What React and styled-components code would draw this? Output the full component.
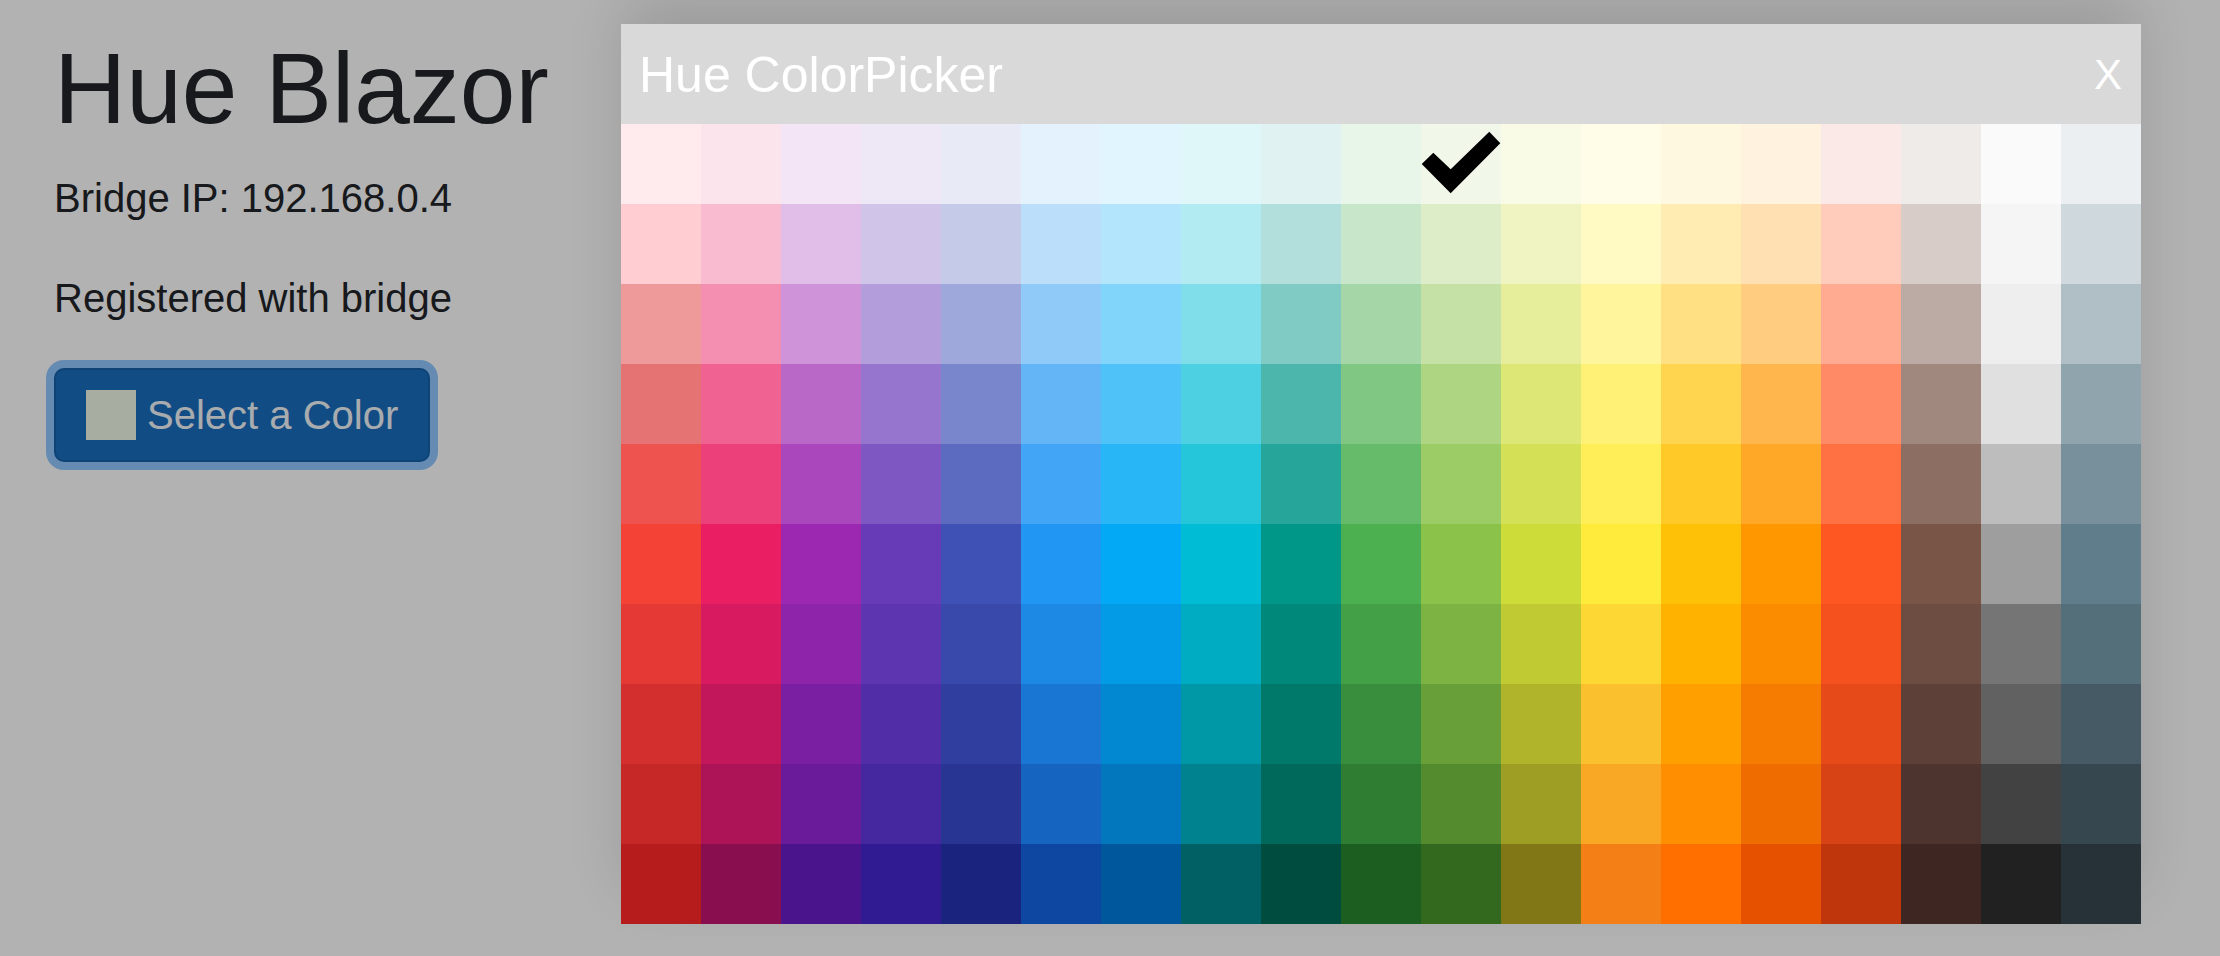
import React, { useState } from 'react';
import styled, { createGlobalStyle } from 'styled-components';

const GlobalStyle = createGlobalStyle`
  html, body {
    margin: 0;
    padding: 0;
    background: #fff;
    font-family: "Liberation Sans", Arial, sans-serif;
    color: #212529;
  }
  * {
    box-sizing: border-box;
  }
`;

const Page = styled.div`
  padding: 28px 54px;
  min-height: 956px;
`;

const Title = styled.h1`
  margin: 0 0 20px;
  font-size: 100px;
  font-weight: 400;
  line-height: 1.2;
`;

const Text = styled.p`
  margin: 0 0 40px;
  font-size: 40px;
  line-height: 1.5;
`;

const PickButton = styled.button`
  display: inline-flex;
  align-items: center;
  gap: 11px;
  padding: 15px 30px;
  font-family: inherit;
  font-size: 40px;
  line-height: 1.5;
  color: rgb(242, 246, 250);
  background: #1a6dbd;
  border: 2.5px solid #1560aa;
  border-radius: 10px;
  box-shadow: 0 0 0 8px rgba(38, 143, 255, 0.5);
  cursor: pointer;
`;

const Swatch = styled.span`
  width: 50px;
  height: 50px;
  background: ${p => p.color};
`;

const Backdrop = styled.div`
  position: fixed;
  inset: 0;
  background: rgba(0, 0, 0, 0.3);
`;

const Modal = styled.div`
  position: fixed;
  top: 24px;
  left: 621px;
  width: 1520px;
  background: #fff;
  box-shadow: 0 -30px 60px rgba(0, 0, 0, 0.13);
`;

const ModalHeader = styled.div`
  height: 100px;
  display: flex;
  align-items: center;
  justify-content: space-between;
  padding: 2px 19px 0 18px;
  background: #d9d9d9;
  color: #fff;
`;

const ModalTitle = styled.div`
  font-size: 50px;
`;

const CloseButton = styled.button`
  padding: 0;
  border: none;
  background: none;
  color: #fff;
  font-family: inherit;
  font-size: 42px;
  cursor: pointer;
`;

const Grid = styled.div`
  display: grid;
  grid-template-columns: repeat(19, 80px);
  grid-auto-rows: 80px;
`;

const Cell = styled.div`
  background: ${p => p.color};
  cursor: pointer;
  position: relative;
`;

const Check = styled.svg`
  position: absolute;
  inset: 0;
  width: 80px;
  height: 80px;
`;

// material palette: one list per hue, 50 to 900
const palette = [
  ['#ffebee', '#ffcdd2', '#ef9a9a', '#e57373', '#ef5350', '#f44336', '#e53935', '#d32f2f', '#c62828', '#b71c1c'],
  ['#fce4ec', '#f8bbd0', '#f48fb1', '#f06292', '#ec407a', '#e91e63', '#d81b60', '#c2185b', '#ad1457', '#880e4f'],
  ['#f3e5f5', '#e1bee7', '#ce93d8', '#ba68c8', '#ab47bc', '#9c27b0', '#8e24aa', '#7b1fa2', '#6a1b9a', '#4a148c'],
  ['#ede7f6', '#d1c4e9', '#b39ddb', '#9575cd', '#7e57c2', '#673ab7', '#5e35b1', '#512da8', '#4527a0', '#311b92'],
  ['#e8eaf6', '#c5cae9', '#9fa8da', '#7986cb', '#5c6bc0', '#3f51b5', '#3949ab', '#303f9f', '#283593', '#1a237e'],
  ['#e3f2fd', '#bbdefb', '#90caf9', '#64b5f6', '#42a5f5', '#2196f3', '#1e88e5', '#1976d2', '#1565c0', '#0d47a1'],
  ['#e1f5fe', '#b3e5fc', '#81d4fa', '#4fc3f7', '#29b6f6', '#03a9f4', '#039be5', '#0288d1', '#0277bd', '#01579b'],
  ['#e0f7fa', '#b2ebf2', '#80deea', '#4dd0e1', '#26c6da', '#00bcd4', '#00acc1', '#0097a7', '#00838f', '#006064'],
  ['#e0f2f1', '#b2dfdb', '#80cbc4', '#4db6ac', '#26a69a', '#009688', '#00897b', '#00796b', '#00695c', '#004d40'],
  ['#e8f5e9', '#c8e6c9', '#a5d6a7', '#81c784', '#66bb6a', '#4caf50', '#43a047', '#388e3c', '#2e7d32', '#1b5e20'],
  ['#f1f8e9', '#dcedc8', '#c5e1a5', '#aed581', '#9ccc65', '#8bc34a', '#7cb342', '#689f38', '#558b2f', '#33691e'],
  ['#f9fbe7', '#f0f4c3', '#e6ee9c', '#dce775', '#d4e157', '#cddc39', '#c0ca33', '#afb42b', '#9e9d24', '#827717'],
  ['#fffde7', '#fff9c4', '#fff59d', '#fff176', '#ffee58', '#ffeb3b', '#fdd835', '#fbc02d', '#f9a825', '#f57f17'],
  ['#fff8e1', '#ffecb3', '#ffe082', '#ffd54f', '#ffca28', '#ffc107', '#ffb300', '#ffa000', '#ff8f00', '#ff6f00'],
  ['#fff3e0', '#ffe0b2', '#ffcc80', '#ffb74d', '#ffa726', '#ff9800', '#fb8c00', '#f57c00', '#ef6c00', '#e65100'],
  ['#fbe9e7', '#ffccbc', '#ffab91', '#ff8a65', '#ff7043', '#ff5722', '#f4511e', '#e64a19', '#d84315', '#bf360c'],
  ['#efebe9', '#d7ccc8', '#bcaaa4', '#a1887f', '#8d6e63', '#795548', '#6d4c41', '#5d4037', '#4e342e', '#3e2723'],
  ['#fafafa', '#f5f5f5', '#eeeeee', '#e0e0e0', '#bdbdbd', '#9e9e9e', '#757575', '#616161', '#424242', '#212121'],
  ['#eceff1', '#cfd8dc', '#b0bec5', '#90a4ae', '#78909c', '#607d8b', '#546e7a', '#455a64', '#37474f', '#263238'],
];

// rows are shades, columns are hues
const shades = palette[0].map((_, shade) => palette.map(hue => hue[shade]));

function App() {
  const [selected, setSelected] = useState('#f1f8e9');

  return (
    <>
      <GlobalStyle />
      <Page>
        <Title>Hue Blazor</Title>
        <Text>Bridge IP: 192.168.0.4</Text>
        <Text>Registered with bridge</Text>
        <PickButton>
          <Swatch color={selected} />
          Select a Color
        </PickButton>
      </Page>
      <Backdrop />
      <Modal>
        <ModalHeader>
          <ModalTitle>Hue ColorPicker</ModalTitle>
          <CloseButton>X</CloseButton>
        </ModalHeader>
        <Grid>
          {shades.flat().map((color, i) => (
            <Cell key={i} color={color} onClick={() => setSelected(color)}>
              {color === selected && (
                <Check viewBox="0 0 80 80">
                  <polygon points="0.7,40 12.3,28.7 29.7,45.3 68.3,7.7 79.3,19.3 29.7,69.3" fill="#000" />
                </Check>
              )}
            </Cell>
          ))}
        </Grid>
      </Modal>
    </>
  );
}

export default App;
